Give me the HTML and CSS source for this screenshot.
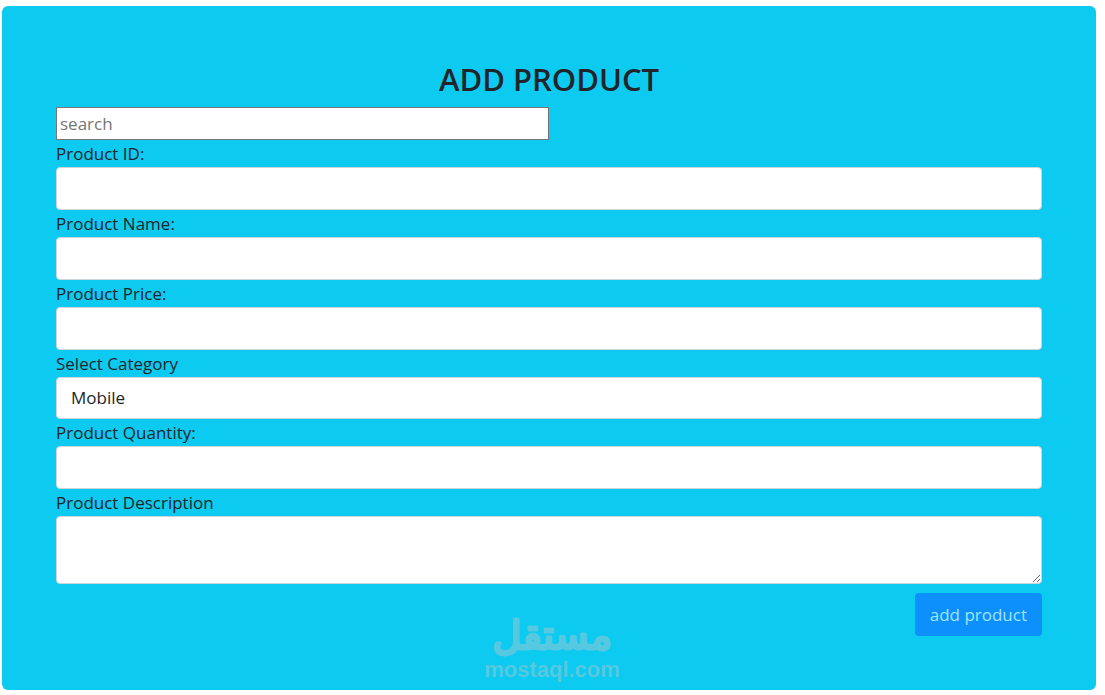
FILE: index.html
```html
<!DOCTYPE html>
<html lang="en">
  <head>
    <meta charset="UTF-8" />
    <meta name="viewport" content="width=device-width, initial-scale=1.0" />
    <title>Add Product</title>
    <link rel="stylesheet" href="styles.css">
  </head>
  <body>
    <form class="product-card">
      <h2>ADD PRODUCT</h2>
      <input type="text" class="search" placeholder="search" aria-label="search" />

      <label for="product-id">Product ID:</label>
      <input type="text" class="form-control" id="product-id" />

      <label for="product-name">Product Name:</label>
      <input type="text" class="form-control" id="product-name" />

      <label for="product-price">Product Price:</label>
      <input type="text" class="form-control" id="product-price" />

      <label for="category">Select Category</label>
      <select class="form-control" id="category">
        <option>Mobile</option>
      </select>

      <label for="quantity">Product Quantity:</label>
      <input type="text" class="form-control" id="quantity" />

      <label for="description">Product Description</label>
      <textarea class="form-control" id="description"></textarea>

      <button type="button" class="btn-add">add product</button>

      <svg class="watermark" width="136" height="68" viewBox="0 0 136 68">
        <text class="mark" x="67" y="32" lang="ar">مستقل</text>
        <text class="domain" x="67" y="60">mostaql.com</text>
      </svg>
    </form>
  </body>
</html>
```

FILE: styles.css
```css
* {
  box-sizing: border-box;
}

body {
  margin: 6px 9px 5px 2px;
  background: #fff;
  color: #212529;
  font-family: "Open Sans", "Noto Sans", sans-serif;
  font-size: 17px;
  line-height: 27px;
}

.product-card {
  position: relative;
  display: flex;
  flex-direction: column;
  padding: 54px;
  background: #0dcaf0;
  border-radius: 6px;
}

h2 {
  margin: 0 0 8px;
  text-align: center;
  font-size: 31px;
  font-weight: 600;
  line-height: 39px;
}

input,
select,
textarea,
button {
  margin: 0;
  font: inherit;
  color: inherit;
}

.search {
  width: 50%;
  height: 33px;
  padding: 1px 3px;
  background: #fff;
  border: 1px solid #767676;
}

.search::placeholder {
  color: #757575;
}

.form-control {
  width: 100%;
  height: 43px;
  padding: 6px 14px;
  background: #fff;
  border: 1px solid #ced4da;
  border-radius: 4px;
}

select.form-control {
  height: 42px;
  padding: 4px 14px 6px;
  appearance: none;
}

textarea.form-control {
  display: block;
  height: 68px;
  resize: vertical;
}

.btn-add {
  align-self: flex-end;
  margin-top: 9px;
  height: 43px;
  padding: 0 15px;
  background: #0d8ffc;
  color: #9fe5fb;
  border: none;
  border-radius: 4px;
  cursor: pointer;
}

/* sits over the bottom edge of the card */
.watermark {
  position: absolute;
  left: 50%;
  bottom: 5px;
  margin-left: -64px;
  overflow: visible;
  pointer-events: none;
}

.watermark text {
  fill: #56c8df;
  text-anchor: middle;
}

.mark {
  font-family: "DejaVu Sans", sans-serif;
  font-size: 40px;
  stroke: #56c8df;
  stroke-width: 3px;
  stroke-linejoin: round;
}

.domain {
  font-family: "Liberation Sans", sans-serif;
  font-size: 22px;
  font-weight: bold;
}
```
